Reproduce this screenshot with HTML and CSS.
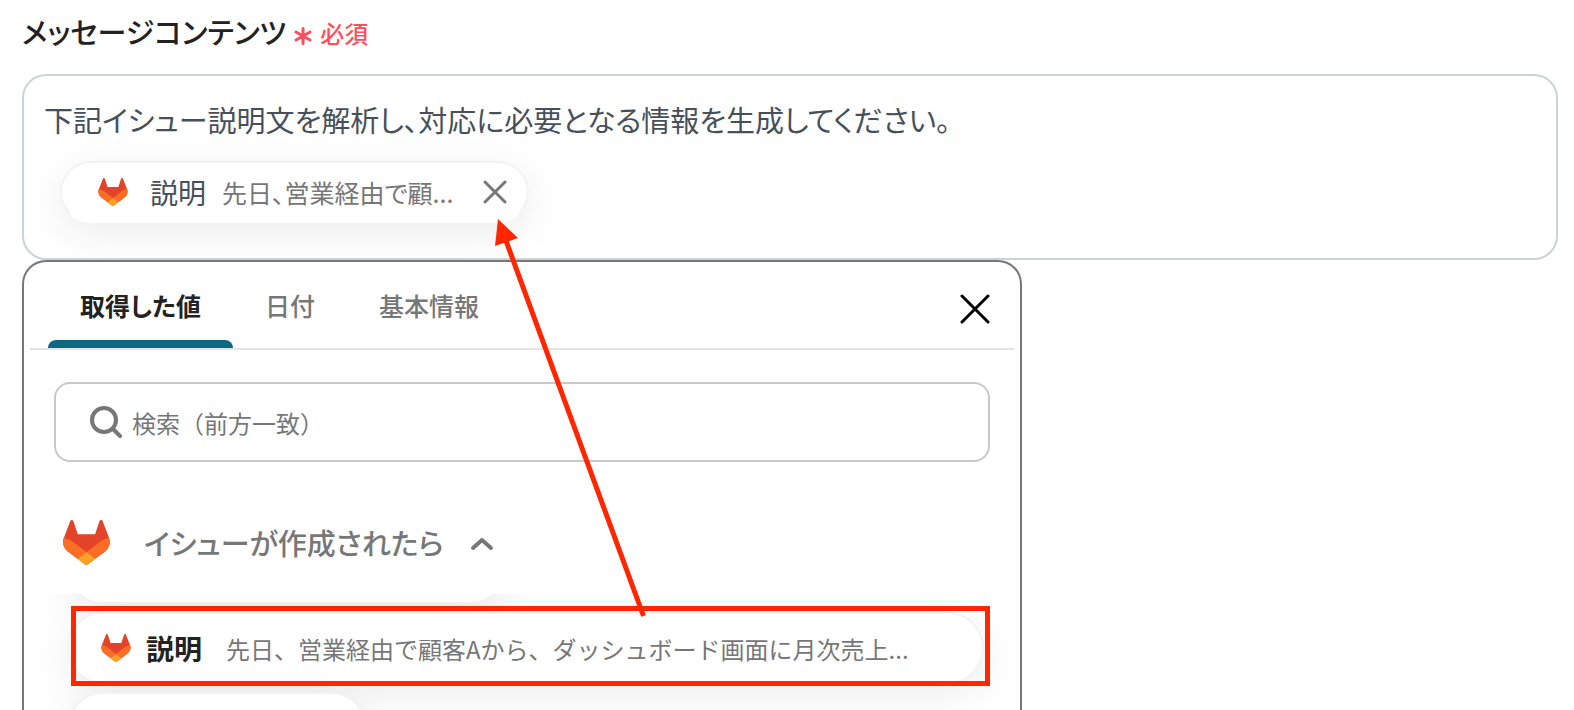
FILE: index.html
```html
<!DOCTYPE html>
<html lang="ja">
<head>
  <meta charset="UTF-8">
  <title>メッセージコンテンツ</title>
  <link rel="stylesheet" href="styles.css">
</head>
<body>

  <svg class="sprite" aria-hidden="true">
    <symbol id="gitlab" viewBox="0 0 25 24">
      <path fill="#e24329" d="m24.507 9.5-.034-.09L21.082.562a.896.896 0 0 0-1.694.091l-2.29 7.01H7.825L5.535.653a.898.898 0 0 0-1.694-.09L.451 9.411.416 9.5a6.297 6.297 0 0 0 2.09 7.278l.012.01.03.022 5.16 3.867 2.56 1.935 1.554 1.176a1.051 1.051 0 0 0 1.268 0l1.555-1.176 2.56-1.935 5.197-3.89.014-.01A6.297 6.297 0 0 0 24.507 9.5Z"/>
      <path fill="#fc6d26" d="m24.507 9.5-.034-.09a11.44 11.44 0 0 0-4.56 2.051l-7.447 5.632 4.742 3.584 5.197-3.89.014-.01A6.297 6.297 0 0 0 24.507 9.5Z"/>
      <path fill="#fca326" d="m7.707 20.677 2.56 1.935 1.555 1.176a1.051 1.051 0 0 0 1.268 0l1.555-1.176 2.56-1.935-4.743-3.584-4.755 3.584Z"/>
      <path fill="#fc6d26" d="M5.01 11.461a11.43 11.43 0 0 0-4.56-2.05L.416 9.5a6.297 6.297 0 0 0 2.09 7.278l.012.01.03.022 5.16 3.867 4.745-3.584-7.444-5.632Z"/>
    </symbol>
  </svg>

  <main class="page">
    <div class="field-label">
      <span id="message-label" class="field-name">メッセージコンテンツ</span>
      <svg class="asterisk" viewBox="0 0 18 18" aria-hidden="true"><path d="M9 1.5v15M2 5l14 8M16 5L2 13"/></svg>
      <span class="required">必須</span>
    </div>

    <div class="editor" role="textbox" aria-multiline="true" aria-labelledby="message-label" contenteditable="true" spellcheck="false">
      <p class="editor-text">下記イシュー説明文を解析し、対応に必要となる情報を生成してください。</p>
      <span class="tag" contenteditable="false">
        <svg class="logo-small"><use href="#gitlab"/></svg>
        <span class="tag-name">説明</span>
        <span class="tag-value">先日、営業経由で顧...</span>
        <button type="button" class="tag-remove" aria-label="削除">
          <svg viewBox="0 0 24 24"><path d="M2 2l20 20M22 2L2 22"/></svg>
        </button>
      </span>
    </div>

    <section class="picker">
      <div class="tabs" role="tablist">
        <button type="button" class="tab active" role="tab" aria-selected="true">取得した値</button>
        <button type="button" class="tab" role="tab" aria-selected="false">日付</button>
        <button type="button" class="tab" role="tab" aria-selected="false">基本情報</button>
        <button type="button" class="close" aria-label="閉じる">
          <svg viewBox="0 0 30 30"><path d="M2 2l26 26M28 2L2 28"/></svg>
        </button>
      </div>

      <label class="search">
        <svg class="search-icon" viewBox="0 0 32 32" aria-hidden="true"><circle cx="14" cy="14" r="12"/><path d="M23 23l7 7"/></svg>
        <input type="text" placeholder="検索（前方一致）" aria-label="検索">
      </label>

      <button type="button" class="group" aria-expanded="true">
        <svg class="logo-large"><use href="#gitlab"/></svg>
        <span class="group-name">イシューが作成されたら</span>
        <svg class="chevron" viewBox="0 0 24 14"><path d="M3 11l9-8 9 8"/></svg>
      </button>

      <div class="values">
        <ul class="value-list">
          <li class="value value-medium"></li>
          <li>
            <button type="button" class="value value-full">
              <svg class="logo-small"><use href="#gitlab"/></svg>
              <span class="value-name">説明</span>
              <span class="value-text">先日、営業経由で顧客Aから、ダッシュボード画面に月次売上...</span>
            </button>
          </li>
          <li class="value value-short"></li>
        </ul>
      </div>
    </section>
  </main>

  <!-- highlight frame and arrow over the form -->
  <svg class="annotation" width="1000" height="700" aria-hidden="true">
    <rect x="73.500" y="608.500" width="914" height="75"/>
    <path class="arrow-line" d="M643.500 616L505 238"/>
    <path class="arrow-head" d="M498 219l20 19-23 8z"/>
  </svg>

</body>
</html>
```
FILE: styles.css
```css
* {
  box-sizing: border-box;
}

body {
  margin: 0;
  height: 100vh;
  overflow: hidden;
  background: #fff;
  color: #222;
  font-family: "Noto Sans CJK JP", sans-serif;
}

button, input {
  font: inherit;
  color: inherit;
  background: none;
  border: 0;
  padding: 0;
}

button {
  cursor: pointer;
}

ul, p {
  margin: 0;
  padding: 0;
  list-style: none;
}

svg {
  display: block;
  flex: none;
  fill: none;
  stroke-linecap: round;
  stroke-linejoin: round;
}

.sprite {
  position: absolute;
  width: 0;
  height: 0;
}

.page {
  display: flex;
  flex-direction: column;
  height: 100%;
  padding: 10px 16px 0 22px;
}

/* label */
.field-label {
  display: flex;
  align-items: center;
  gap: 8px;
  height: 42px;
  margin-bottom: 22px;
  font-feature-settings: "palt";
}

.field-name {
  font-size: 29px;
  font-weight: 500;
}

.asterisk {
  width: 18px;
  height: 18px;
  margin-top: 10px;
  stroke: #ff4d5e;
  stroke-width: 3;
}

.required {
  padding-top: 2px;
  color: #ff4d5e;
  font-size: 24px;
  font-weight: 500;
}

/* message box */
.editor {
  flex: none;
  min-height: 186px;
  padding: 22px 20px;
  border: 2px solid #cdd2d8;
  border-radius: 24px;
  color: #47505a;
  font-size: 29px;
  line-height: 42px;
  font-feature-settings: "palt";
  outline: none;
}

.tag {
  display: inline-flex;
  align-items: center;
  height: 62px;
  margin: 21px 0 0 16px;
  padding: 0 20px 0 36px;
  border: 2px solid #f3f3f3;
  border-bottom-color: #fff;
  border-radius: 31px;
  background: #fff;
  box-shadow: 0 10px 40px rgba(0, 0, 0, 0.08);
}

.logo-small {
  width: 30px;
  height: 28px;
}

.tag-name {
  margin: 0 16px 0 22px;
  font-size: 28px;
}

.tag-value {
  color: #777;
  font-size: 25px;
}

.tag-remove {
  margin-left: 30px;
}

.tag-remove svg {
  width: 24px;
  height: 24px;
  stroke: #777;
  stroke-width: 3;
}

/* value picker */
.picker {
  position: relative;
  display: flex;
  flex: 1;
  flex-direction: column;
  width: 100%;
  max-width: 1000px;
  min-height: 0;
  border: 2px solid #777;
  border-bottom: 0;
  border-radius: 24px 24px 0 0;
  background: #fff;
}

.tabs {
  display: flex;
  flex: none;
  height: 88px;
  margin: 0 6px;
  padding: 0 24px 0 18px;
  border-bottom: 2px solid #e4e4e4;
}

.tab {
  padding: 8px 32px 0;
  border-bottom: 8px solid transparent;
  color: #777;
  font-size: 25px;
  font-weight: 500;
  font-feature-settings: "palt";
}

.tab.active {
  position: relative;
  color: #222;
  font-weight: 700;
}

.tab.active::after {
  content: "";
  position: absolute;
  left: 0;
  right: 0;
  bottom: -8px;
  height: 8px;
  border-radius: 8px 8px 0 0;
  background: #0b6882;
}

.close {
  margin-left: auto;
}

.close svg {
  width: 30px;
  height: 30px;
  margin-top: 8px;
  stroke: #000;
  stroke-width: 3;
}

.search {
  display: flex;
  flex: none;
  align-items: center;
  gap: 10px;
  height: 80px;
  margin: 32px 30px 0;
  padding: 0 34px;
  border: 2px solid #c8c8c8;
  border-radius: 16px;
}

.search-icon {
  width: 32px;
  height: 32px;
  stroke: #777;
  stroke-width: 4;
}

.search input {
  flex: 1;
  min-width: 0;
  font-size: 24px;
  outline: none;
}

.search input::placeholder {
  color: #777;
}

.group {
  display: flex;
  flex: none;
  align-items: center;
  height: 100px;
  margin: 30px 39px 2px;
  color: #777;
}

.logo-large {
  width: 47px;
  height: 45px;
}

.group-name {
  margin: 0 26px 0 34px;
  font-size: 29px;
  font-weight: 500;
  font-feature-settings: "palt";
}

.chevron {
  width: 24px;
  height: 14px;
  margin-top: 4px;
  stroke: #777;
  stroke-width: 4;
}

/* the list is scrolled part of the way down */
.values {
  flex: 1;
  min-height: 0;
  overflow: hidden;
}

.value-list {
  display: flex;
  flex-direction: column;
  gap: 8px;
  margin-top: -62px;
  padding: 0 36px 0 43px;
}

.value {
  display: flex;
  align-items: center;
  height: 72px;
  padding: 0 32px;
  border: 2px solid #f3f3f3;
  border-radius: 36px;
  background: #fff;
  box-shadow: 0 10px 40px rgba(0, 0, 0, 0.08);
}

.value-medium {
  width: 440px;
}

.value-full {
  width: 100%;
}

.value-short {
  width: 300px;
}

.value-name {
  margin: 0 24px 0 15px;
  font-size: 28px;
  font-weight: 700;
}

.value-text {
  color: #777;
  font-size: 24px;
}

.annotation {
  position: absolute;
  top: 0;
  left: 0;
  pointer-events: none;
  stroke: #ff2600;
  stroke-width: 5;
  stroke-linecap: butt;
  stroke-linejoin: miter;
}

.arrow-head {
  fill: #ff2600;
  stroke: none;
}
```
